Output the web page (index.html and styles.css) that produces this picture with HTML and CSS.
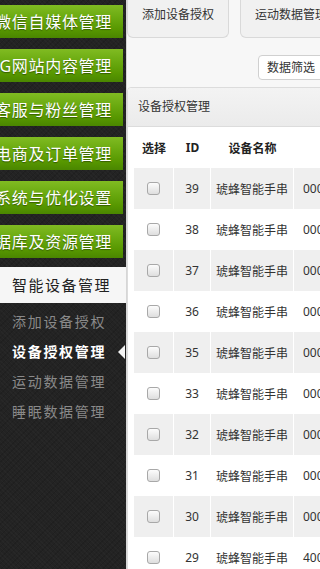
FILE: index.html
```html
<!DOCTYPE html>
<html lang="zh-CN">
<head>
<meta charset="utf-8">
<title>设备授权管理</title>
<link rel="stylesheet" href="styles.css">
</head>
<body>
<div class="app">
  <aside class="sidebar">
    <nav class="groups">
      <a class="group"><span>微信自媒体管理</span></a>
      <a class="group"><span>3G网站内容管理</span></a>
      <a class="group"><span>客服与粉丝管理</span></a>
      <a class="group"><span>电商及订单管理</span></a>
      <a class="group"><span>系统与优化设置</span></a>
      <a class="group"><span>数据库及资源管理</span></a>
    </nav>
    <div class="section-title">智能设备管理</div>
    <ul class="submenu">
      <li>添加设备授权</li>
      <li class="active">设备授权管理</li>
      <li>运动数据管理</li>
      <li>睡眠数据管理</li>
    </ul>
  </aside>
  <main class="main">
    <div class="tabs">
      <div class="tab">添加设备授权</div>
      <div class="tab">运动数据管理</div>
      <div class="tab">睡眠数据管理</div>
    </div>
    <div class="toolbar">
      <button class="btn">数据筛选</button>
      <button class="btn">导出数据</button>
    </div>
    <section class="panel">
      <div class="panel-head">设备授权管理</div>
      <div class="panel-body">
        <table class="grid">
          <colgroup>
            <col class="c-sel"><col class="c-id"><col class="c-name"><col class="c-code">
          </colgroup>
          <thead>
            <tr><th>选择</th><th>ID</th><th>设备名称</th><th>设备编号</th></tr>
          </thead>
          <tbody>
            <tr><td><span class="cb"></span></td><td>39</td><td>琥蜂智能手串</td><td class="code">0001F8A239</td></tr>
            <tr><td><span class="cb"></span></td><td>38</td><td>琥蜂智能手串</td><td class="code">0001F8A238</td></tr>
            <tr><td><span class="cb"></span></td><td>37</td><td>琥蜂智能手串</td><td class="code">0001F8A237</td></tr>
            <tr><td><span class="cb"></span></td><td>36</td><td>琥蜂智能手串</td><td class="code">0001F8A236</td></tr>
            <tr><td><span class="cb"></span></td><td>35</td><td>琥蜂智能手串</td><td class="code">0001F8A235</td></tr>
            <tr><td><span class="cb"></span></td><td>33</td><td>琥蜂智能手串</td><td class="code">0001F8A233</td></tr>
            <tr><td><span class="cb"></span></td><td>32</td><td>琥蜂智能手串</td><td class="code">0001F8A232</td></tr>
            <tr><td><span class="cb"></span></td><td>31</td><td>琥蜂智能手串</td><td class="code">0001F8A231</td></tr>
            <tr><td><span class="cb"></span></td><td>30</td><td>琥蜂智能手串</td><td class="code">0001F8A230</td></tr>
            <tr><td><span class="cb"></span></td><td>29</td><td>琥蜂智能手串</td><td class="code">4001F8A229</td></tr>
          </tbody>
        </table>
      </div>
    </section>
  </main>
</div>
</body>
</html>
```
FILE: styles.css
```css
html, body {
  margin: 0;
  padding: 0;
  height: 100%;
  overflow: hidden;
}
body {
  font-family: "Noto Sans", "Noto Sans CJK SC", sans-serif;
  background: #f7f7f7;
  color: #333;
}
.app {
  display: flex;
  width: 320px;
  height: 569px;
  overflow: hidden;
}

/* ---------- sidebar ---------- */
.sidebar {
  flex: none;
  width: 126px;
  background-color: #232323;
  background-image:
    repeating-linear-gradient(45deg, rgba(255,255,255,0.018) 0 1px, transparent 1px 3px),
    repeating-linear-gradient(-45deg, rgba(0,0,0,0.12) 0 1px, transparent 1px 4px);
  border-right: 1px solid #d6d6d6;
  padding-top: 5px;
  box-sizing: content-box;
}
.groups {
  display: flex;
  flex-direction: column;
  gap: 11px;
}
.group {
  display: flex;
  justify-content: flex-end;
  align-items: center;
  width: 123px;
  height: 33px;
  box-sizing: border-box;
  padding-right: 11px;
  overflow: hidden;
  white-space: nowrap;
  background: linear-gradient(to bottom, #80bb22 0%, #69a90f 40%, #579700 75%, #4a8600 100%);
  color: #fff;
  font-size: 16px;
  line-height: 20px;
  letter-spacing: 0.7px;
  text-shadow: 0 1px 1px rgba(0,0,0,0.4);
}
.group span {
  flex: none;
}
.section-title {
  margin-top: 9px;
  height: 36px;
  line-height: 36px;
  padding-left: 12px;
  background: #f6f6f6;
  color: #222;
  font-size: 15px;
  letter-spacing: 1.5px;
  white-space: nowrap;
}
.submenu {
  list-style: none;
  margin: 0;
  padding: 4px 0 0;
}
.submenu li {
  position: relative;
  height: 30px;
  line-height: 30px;
  padding-left: 12px;
  color: #8a8a8a;
  font-size: 14px;
  letter-spacing: 1.7px;
  white-space: nowrap;
}
.submenu li.active {
  color: #fff;
  font-weight: bold;
}
.submenu li.active::after {
  content: "";
  position: absolute;
  right: 1px;
  top: 50%;
  margin-top: -7px;
  border-top: 7px solid transparent;
  border-bottom: 7px solid transparent;
  border-right: 7px solid #f4f4f4;
}

/* ---------- main ---------- */
.main {
  flex: none;
  width: 440px;
  background: #f7f7f7;
}
.tabs {
  display: flex;
  gap: 11px;
  height: 38px;
}
.tab {
  flex: none;
  height: 38px;
  box-sizing: border-box;
  padding: 7px 14px 0;
  line-height: 16px;
  font-size: 12px;
  color: #333;
  background: #f1f1f1;
  border: 1px solid #d9d9d9;
  border-top: none;
  border-radius: 0 0 6px 6px;
  white-space: nowrap;
}
.toolbar {
  display: flex;
  gap: 8px;
  margin-top: 17px;
  padding-left: 131px;
  height: 25px;
}
.btn {
  height: 25px;
  padding: 0 8px;
  font-family: inherit;
  font-size: 12px;
  line-height: 23px;
  color: #333;
  background: #fff;
  border: 1px solid #d0d0d0;
  border-radius: 4px;
  white-space: nowrap;
}
.panel {
  margin-top: 7px;
  border: 1px solid #dcdcdc;
  border-radius: 4px 4px 0 0;
  background: #fff;
  height: 600px;
}
.panel-head {
  height: 38px;
  line-height: 38px;
  padding-left: 10px;
  font-size: 12px;
  color: #333;
  background: linear-gradient(to bottom, #f3f3f3, #ebebeb);
  border-bottom: 1px solid #dcdcdc;
  border-radius: 4px 4px 0 0;
}
.panel-body {
  padding: 0 6px;
}
.grid {
  border-collapse: separate;
  border-spacing: 0;
  table-layout: fixed;
  width: 264px;
  font-size: 12px;
}
.c-sel { width: 40px; }
.c-id { width: 37px; }
.c-name { width: 83px; }
.c-code { width: 104px; }
.grid th {
  height: 41px;
  padding: 0;
  font-weight: bold;
  color: #222;
  text-align: center;
  white-space: nowrap;
  overflow: hidden;
}
.grid td {
  height: 41px;
  padding: 0;
  text-align: center;
  color: #333;
  border-right: 1px solid #fff;
  white-space: nowrap;
  overflow: hidden;
  box-sizing: border-box;
}
.grid tbody tr:nth-child(odd) td {
  background: #efefef;
}
.grid td.code {
  text-align: left;
  padding-left: 9px;
}
.cb {
  display: inline-block;
  width: 11px;
  height: 11px;
  border: 1px solid #a8a8a8;
  border-radius: 3px;
  background: linear-gradient(to bottom, #fcfcfc, #dedede);
  vertical-align: middle;
  position: relative;
  top: -1px;
}
```
